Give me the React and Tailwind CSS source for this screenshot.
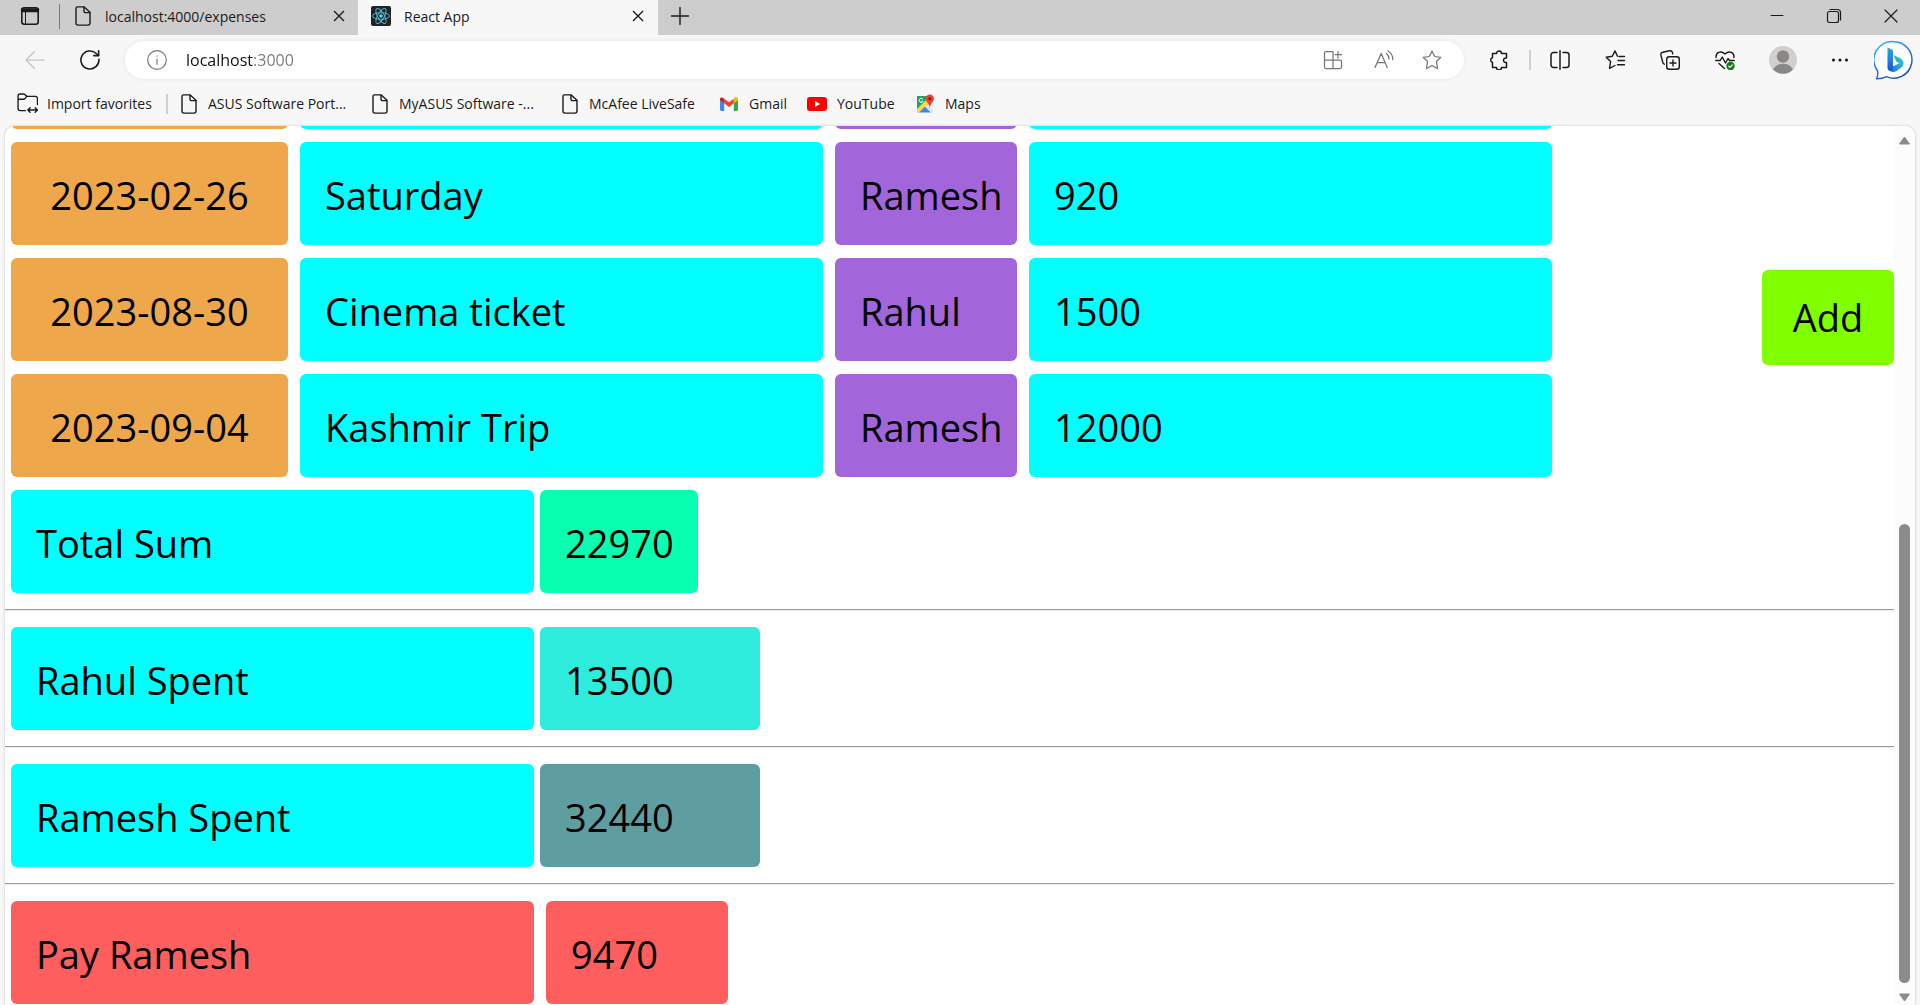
import React from "react";

const expenses = [
  { date: "", name: "", who: "", amount: "" },
  { date: "2023-02-26", name: "Saturday", who: "Ramesh", amount: "920" },
  { date: "2023-08-30", name: "Cinema ticket", who: "Rahul", amount: "1500" },
  { date: "2023-09-04", name: "Kashmir Trip", who: "Ramesh", amount: "12000" },
];

function Icon({ size = 20, sw = 1.25, className = "", children }) {
  return (
    <svg
      width={size}
      height={size}
      viewBox="0 0 20 20"
      fill="none"
      stroke="currentColor"
      strokeWidth={sw}
      strokeLinecap="round"
      strokeLinejoin="round"
      className={"block shrink-0 " + className}
      aria-hidden="true"
    >
      {children}
    </svg>
  );
}

const FileIcon = () => (
  <Icon sw={1.4}>
    <path d="M4.2.9h7L17 6.3v10.8a2 2 0 0 1-2 2H5a2 2 0 0 1-2-2V2.3A1.4 1.4 0 0 1 4.2.9z" />
    <path d="M11 1.2v4a1.4 1.4 0 0 0 1.4 1.4h4.2" />
  </Icon>
);

const CloseIcon = () => (
  <svg width="12" height="12" viewBox="0 0 12 12" stroke="currentColor" strokeWidth="1.4" className="block" aria-hidden="true">
    <path d="M1 1l10 10M11 1L1 11" />
  </svg>
);

const ReactLogo = () => (
  <svg width="20" height="20" viewBox="0 0 20 20" className="block shrink-0" aria-hidden="true">
    <rect width="20" height="20" rx="2" fill="#222" />
    <g fill="none" stroke="#53c1de" strokeWidth="0.9">
      <ellipse cx="10" cy="10" rx="8.6" ry="3.3" />
      <ellipse cx="10" cy="10" rx="8.6" ry="3.3" transform="rotate(60 10 10)" />
      <ellipse cx="10" cy="10" rx="8.6" ry="3.3" transform="rotate(120 10 10)" />
    </g>
    <circle cx="10" cy="10" r="1.7" fill="#61dafb" />
  </svg>
);

const GmailLogo = () => (
  <svg width="20" height="20" viewBox="0 0 20 20" className="block shrink-0" aria-hidden="true">
    <path d="M1 5.5v10A1.4 1.4 0 0 0 2.400 16.900H5.200V8.500z" fill="#4285f4" />
    <path d="M14.800 16.900h2.800A1.400 1.400 0 0 0 19 15.500v-10L14.800 8.500z" fill="#34a853" />
    <path d="M14.800 4.700v4.600L19 6.200V4.900c0-1.700-2-2.600-3.300-1.600z" fill="#fbbc04" />
    <path d="M5.200 9.300V4.700L10 8.300l4.800-3.600v4.600L10 12.900z" fill="#ea4335" />
    <path d="M1 4.900v1.300l4.200 3.100V4.700l-.9-.7C3 2.900 1 3.500 1 4.900z" fill="#c5221f" />
  </svg>
);

const YouTubeLogo = () => (
  <svg width="20" height="20" viewBox="0 0 20 20" className="block shrink-0" aria-hidden="true">
    <rect y="3" width="20" height="14" rx="3" fill="#f00" />
    <path d="M8 7v6l5.200-3z" fill="#fff" />
  </svg>
);

const MapsLogo = () => (
  <svg width="20" height="20" viewBox="0 0 20 20" className="block shrink-0" aria-hidden="true">
    <path d="M2 2h12v7l-5 5-7 4.500z" fill="#1fa463" />
    <path d="M2 18.500V15L14 3l3 3L4.500 18.500z" fill="#ffd84d" />
    <path d="M4 18.500l6-6 6 6z" fill="#4285f4" />
    <path d="M10 12.500l2-2 6 5.500v1.500a1 1 0 0 1-1 1h-1z" fill="#dfe3e8" />
    <path d="M7.800 5.200A2 2 0 1 0 8 7.200H6.300" fill="none" stroke="#fff" strokeWidth="1" />
    <path d="M14.800 0.500a4.200 4.200 0 0 1 4.200 4.300c0 3-3.200 4-4.200 9-1-5-4.200-6-4.200-9A4.200 4.200 0 0 1 14.800.5z" fill="#ea4335" />
    <circle cx="14.800" cy="4.700" r="1.500" fill="#811411" />
  </svg>
);

const BingLogo = () => (
  <svg width="40" height="40" viewBox="0 0 40 40" className="block" aria-hidden="true">
    <defs>
      <linearGradient id="ring" x1="0" y1="0" x2="0.600" y2="1">
        <stop offset="0" stopColor="#22c3f3" />
        <stop offset="0.500" stopColor="#2b7de9" />
        <stop offset="1" stopColor="#2450c8" />
      </linearGradient>
      <linearGradient id="stem" x1="0" y1="0" x2="0" y2="1">
        <stop offset="0" stopColor="#2da4f5" />
        <stop offset="1" stopColor="#1557d6" />
      </linearGradient>
      <linearGradient id="bowl" x1="1" y1="0" x2="0" y2="1">
        <stop offset="0" stopColor="#36d6d0" />
        <stop offset="1" stopColor="#2466e8" />
      </linearGradient>
    </defs>
    <path
      d="M20 1.700a18.200 18.200 0 1 1-7.500 34.900c-2.600 1.500-6 2.200-10 2.200 1.300-2.500 1.500-5 1.300-7.600A18.200 18.200 0 0 1 20 1.700z"
      fill="#fff"
      stroke="url(#ring)"
      strokeWidth="1.500"
      strokeLinejoin="round"
    />
    <path d="M17 31.500a4.500 4.500 0 0 1-3-3l11.500-5.300-3-1.500-3.200-6.700 7 3.200c3.500 1.800 4.400 5.800 1.700 8.800L22.500 31a5.500 5.500 0 0 1-5.500.5z" fill="url(#bowl)" />
    <path d="M13.500 7.500l4 1.700a2 2 0 0 1 1.500 2V27a4 4 0 0 1-1.500 3.500c-2 1-4-.7-4-2.800z" fill="url(#stem)" />
  </svg>
);

function ToolButton({ label, className = "", children }) {
  return (
    <button type="button" aria-label={label} className={"flex h-8 shrink-0 items-center justify-center " + className}>
      {children}
    </button>
  );
}

function TitleBar() {
  return (
    <div className="flex h-[35px] shrink-0 items-start bg-[#cdcdcd] text-[14px] text-[#1b1b1b]">
      <ToolButton label="Tab actions" className="w-[59px]">
        <Icon sw={1.6}>
          <rect x="1.800" y="1.800" width="16.400" height="16.400" rx="2.500" />
          <path d="M2 3.500h16M2 5h16" strokeWidth="2.500" />
          <path d="M5.500 6v12" strokeWidth="1" />
        </Icon>
      </ToolButton>
      <div className="mt-1 h-[25px] w-px bg-[#777]" />
      <div className="flex h-8 w-[298px] items-center pl-[13px] pr-[13px]">
        <FileIcon />
        <a href="#expenses" className="ml-3 flex-1 whitespace-nowrap">localhost:4000/expenses</a>
        <button type="button" aria-label="Close localhost:4000/expenses"><CloseIcon /></button>
      </div>
      <div className="flex h-[35px] w-[300px] items-center bg-[#f7f7f7] pb-[3px] pl-[13px] pr-[14px]">
        <ReactLogo />
        <a href="#app" className="ml-[13px] flex-1 whitespace-nowrap">React App</a>
        <button type="button" aria-label="Close React App"><CloseIcon /></button>
      </div>
      <ToolButton label="New tab" className="w-[43px]">
        <Icon sw={1.4}>
          <path d="M10 1.500v17M1.500 10h17" />
        </Icon>
      </ToolButton>
      <div className="flex-1" />
      <ToolButton label="Minimise" className="w-[57px]">
        <Icon sw={1}><path d="M4 9.500h12" /></Icon>
      </ToolButton>
      <ToolButton label="Restore" className="w-[57px]">
        <Icon sw={1.200}>
          <rect x="3.500" y="5.500" width="11" height="11" rx="2" />
          <path d="M6 3.500h7.500a3 3 0 0 1 3 3V14" />
        </Icon>
      </ToolButton>
      <ToolButton label="Close window" className="w-[58px]">
        <Icon sw={1.200}><path d="M4 4l12 12M16 4L4 16" /></Icon>
      </ToolButton>
    </div>
  );
}

const STAR = "M10 .9l2.700 5.600 6.100.8-4.400 4.200 1.100 6.200a.5.5 0 0 1-.7.6L10 15.500l-4.800 2.800a.5.5 0 0 1-.7-.6l1.100-6.200L1.200 7.300l6.100-.8z";

function Toolbar() {
  return (
    <div className="flex h-[50px] shrink-0 items-center text-[#1b1b1b]">
      <ToolButton label="Back" className="ml-[19px] w-8 text-[#c4c4c4]">
        <Icon><path d="M19 10H1.500M9.500 1.500L1 10l8.500 8.500" /></Icon>
      </ToolButton>
      <ToolButton label="Reload" className="ml-[23px] w-8">
        <Icon sw={1.600}>
          <path d="M18.900 9.200A9 9 0 1 1 16.200 3.500L18.500 5.500" />
          <path d="M18.600.9v4.700h-4.800" />
        </Icon>
      </ToolButton>
      <div className="ml-[19px] flex h-[38px] flex-1 items-center rounded-full bg-white pl-[22px] pr-[22px] text-[#777] shadow-[0_0_5px_rgba(0,0,0,0.07)]">
        <Icon sw={1.200}>
          <circle cx="10" cy="10" r="9.300" />
          <path d="M10 9v5.200M10 5.800v.4" />
        </Icon>
        <input
          aria-label="Address"
          defaultValue="localhost:3000"
          className="ml-[19px] min-w-0 flex-1 bg-[linear-gradient(90deg,#111_68px,#777_68px)] bg-clip-text text-[16px] text-transparent outline-none"
        />
        <ToolButton label="Apps">
          <Icon>
            <path d="M10 10H1.500V3A1.500 1.500 0 0 1 3 1.500h7V10zM10 10h7a1.500 1.500 0 0 1 1.500 1.500V17a1.500 1.500 0 0 1-1.500 1.500h-7zM1.500 10H10v8.500H3A1.500 1.500 0 0 1 1.500 17zM15 1.500v6.500M12 4.700h6.500" />
          </Icon>
        </ToolButton>
        <ToolButton label="Read aloud" className="ml-[31px]">
          <Icon>
            <path d="M1 17.500L7.200 3.500l6 14M3.200 12.500h8M12.500 3.500a7 7 0 0 1 2.500 5.500M14 1c3 1.700 4.800 5 4.800 8.500" />
          </Icon>
        </ToolButton>
        <ToolButton label="Add favorite" className="ml-[28px]">
          <Icon><path d={STAR} /></Icon>
        </ToolButton>
      </div>
      <ToolButton label="Extensions" className="ml-[25px]">
        <Icon sw={1.500}>
          <path d="M3.500 3.500H7.500a2.500 2.500 0 0 1 5 0H17.500V8h-1.200a2.300 2.300 0 0 0 0 4.500h1.200v5H12.500a2.500 2.500 0 0 1-5 0H3.500V12.500a2.500 2.500 0 0 1 0-4.800z" />
        </Icon>
      </ToolButton>
      <div className="ml-5 h-5 w-[2px] bg-[#cfcfcf]" />
      <ToolButton label="Split screen" className="ml-[19px]">
        <Icon sw={1.500}>
          <path d="M7 2.500H3.500A2.500 2.500 0 0 0 1 5v10a2.500 2.500 0 0 0 2.500 2.500H7M13 2.500h3.500A2.500 2.500 0 0 1 19 5v10a2.500 2.500 0 0 1-2.500 2.500H13M10 .8v18.400" />
        </Icon>
      </ToolButton>
      <ToolButton label="Favorites" className="ml-[35px]">
        <Icon sw={1.400}>
          <path d="M12.500 6.200L10 .9 7.300 6.300l-6.100.9 4.400 4.300-1.100 6.800L10 15.500M14 6.500h5.500M13 10.500h6.500M12.500 14.800h7" />
        </Icon>
      </ToolButton>
      <ToolButton label="Collections" className="ml-[35px]">
        <Icon sw={1.400}>
          <rect x="6.700" y="6.700" width="12.600" height="12.600" rx="2.500" />
          <path d="M13 10v6M10 13h6M4.300 14.200A2.500 2.500 0 0 1 2.700 12L.9 5.200A2.500 2.500 0 0 1 2.700 2.300L9.500.8a2.500 2.500 0 0 1 3 1.800l.3 1.200" />
        </Icon>
      </ToolButton>
      <ToolButton label="Browser essentials" className="ml-[35px]">
        <Icon sw={1.400}>
          <path d="M1.100 7.500C.5 3 5.500-.2 10 4c4.500-4.200 9.500-1 8.900 3.500M.8 10.500h4.400l2-3.500 3.300 6 2.500-4.500 1.500 2h4.700M4 13.500l5.500 5" />
          <circle cx="15.500" cy="16" r="4.200" fill="#107c10" stroke="none" />
          <path d="M13.700 16.200l1.200 1.200 2.500-2.600" stroke="#fff" strokeWidth="1.100" />
        </Icon>
      </ToolButton>
      <ToolButton label="Profile" className="ml-[34px]">
        <svg width="28" height="28" viewBox="0 0 28 28" className="block" aria-hidden="true">
          <circle cx="14" cy="14" r="14" fill="#d2d0ce" />
          <circle cx="14" cy="10.500" r="6.200" fill="#8a8886" />
          <path d="M4 23.500a11.500 11.500 0 0 1 20 0 14 14 0 0 1-20 0z" fill="#8a8886" />
        </svg>
      </ToolButton>
      <ToolButton label="Settings and more" className="ml-[33px]">
        <Icon>
          <g fill="currentColor" stroke="none">
            <circle cx="3.500" cy="10" r="1.600" />
            <circle cx="10" cy="10" r="1.600" />
            <circle cx="16.500" cy="10" r="1.600" />
          </g>
        </Icon>
      </ToolButton>
      <ToolButton label="Bing" className="ml-6 mr-[6px]">
        <BingLogo />
      </ToolButton>
    </div>
  );
}

function Bookmark({ icon, label, className }) {
  return (
    <a href="#bookmark" className={"flex shrink-0 items-center whitespace-nowrap " + className}>
      {icon}
      {label}
    </a>
  );
}

function Bookmarks() {
  return (
    <nav aria-label="Favorites bar" className="flex h-[41px] shrink-0 items-center pb-1 pl-[17px] text-[14px] text-[#1b1b1b]">
      <Bookmark
        className="w-[149px] gap-[9px]"
        label="Import favorites"
        icon={
          <Icon size={21} sw={1.300}>
            <path d="M8 16.800H3.200A2.200 2.200 0 0 1 1 14.600V3a2 2 0 0 1 2-2h3.800L9.500 3.200h7.800a2.200 2.200 0 0 1 2.200 2.200V11M1 6h5.500c1.500 0 2-2.600 3-2.800M10.500 16.200h9M12.500 14l-2.200 2.200 2.200 2.200M17.300 14l2.200 2.200-2.200 2.200" />
          </Icon>
        }
      />
      <div className="mr-[11px] h-5 w-[2px] bg-[#d0d0d0]" />
      <Bookmark className="w-[191px] gap-[9px]" icon={<FileIcon />} label="ASUS Software Port..." />
      <Bookmark className="w-[190px] gap-[9px]" icon={<FileIcon />} label="MyASUS Software -..." />
      <Bookmark className="w-[159px] gap-[9px]" icon={<FileIcon />} label="McAfee LiveSafe" />
      <Bookmark className="w-[88px] gap-[10px]" icon={<GmailLogo />} label="Gmail" />
      <Bookmark className="w-[108px] gap-[10px]" icon={<YouTubeLogo />} label="YouTube" />
      <Bookmark className="gap-[10px]" icon={<MapsLogo />} label="Maps" />
    </nav>
  );
}

function ExpenseTable() {
  return (
    <table aria-label="Expenses" className="-ml-[12px] w-max table-fixed border-separate border-spacing-x-[12px] border-spacing-y-[13px]">
      <tbody>
        {expenses.map((e, i) => (
          <tr key={i} className="h-[103px]">
            <td className="w-[277px] rounded-md bg-[#eea74b] px-0 pb-0 pt-[3px] text-center">{e.date}</td>
            <td className="w-[523px] rounded-md bg-[#00ffff] pb-0 pl-[25px] pr-0 pt-[3px]">{e.name}</td>
            <td className="w-[182px] rounded-md bg-[#a366da] pb-0 pl-[25px] pr-0 pt-[3px]">{e.who}</td>
            <td className="w-[523px] rounded-md bg-[#00ffff] pb-0 pl-[25px] pr-0 pt-[3px]">{e.amount}</td>
          </tr>
        ))}
      </tbody>
    </table>
  );
}

function Summary({ label, value, labelClass = "bg-[#00ffff]", valueClass }) {
  return (
    <dl className="flex h-[103px] shrink-0">
      <dt className={"flex w-[523px] items-center rounded-md pl-[25px] pt-[3px] " + labelClass}>{label}</dt>
      <dd className={"flex items-center rounded-md pl-[25px] pt-[3px] " + valueClass}>{value}</dd>
    </dl>
  );
}

const Rule = () => <hr className="-ml-1.5 my-4 h-[2px] shrink-0 border-b border-t border-b-[#eee] border-t-[#9a9a9a]" />;

export default function App() {
  return (
    <div className="flex h-screen flex-col overflow-hidden bg-[#f7f7f7] font-['Open_Sans',sans-serif]">
      <TitleBar />
      <Toolbar />
      <Bookmarks />
      <div className="ml-[5px] mr-[5px] flex min-h-0 flex-1 overflow-hidden rounded-t-[10px] bg-white shadow-[0_0_2px_1px_rgba(0,0,0,0.1)]">
        <main className="relative flex min-w-0 flex-1 flex-col justify-end overflow-hidden pb-[1px] pl-1.5 text-[38px] text-black">
          <ExpenseTable />
          <Summary label="Total Sum" value="22970" valueClass="ml-1.5 w-[158px] bg-[#09ffb0]" />
          <Rule />
          <Summary label="Rahul Spent" value="13500" valueClass="ml-1.5 w-[220px] bg-[#2decdc]" />
          <Rule />
          <Summary label="Ramesh Spent" value="32440" valueClass="ml-1.5 w-[220px] bg-[#5f9ea0]" />
          <Rule />
          <Summary label="Pay Ramesh" value="9470" labelClass="bg-[#ff5e5e]" valueClass="ml-3 w-[182px] bg-[#ff5e5e]" />
          <button type="button" className="absolute right-0 top-36 h-[95px] w-[132px] rounded-md bg-[#80ff00]">
            Add
          </button>
        </main>
        <div className="flex w-[21px] shrink-0 flex-col items-center bg-[#fcfcfc] pb-[3px] pt-[10px]" aria-hidden="true">
          <svg width="11" height="9" viewBox="0 0 11 9" className="shrink-0"><path d="M5.500 1L10.500 8h-10z" fill="#8b8b8b" stroke="#8b8b8b" strokeLinejoin="round" /></svg>
          <div className="grow-[379]" />
          <div className="w-[11px] grow-[459] rounded-full bg-[#8b8b8b]" />
          <div className="h-[10px] shrink-0" />
          <svg width="11" height="9" viewBox="0 0 11 9" className="shrink-0"><path d="M5.500 8L.5 1h10z" fill="#8b8b8b" stroke="#8b8b8b" strokeLinejoin="round" /></svg>
        </div>
      </div>
    </div>
  );
}
